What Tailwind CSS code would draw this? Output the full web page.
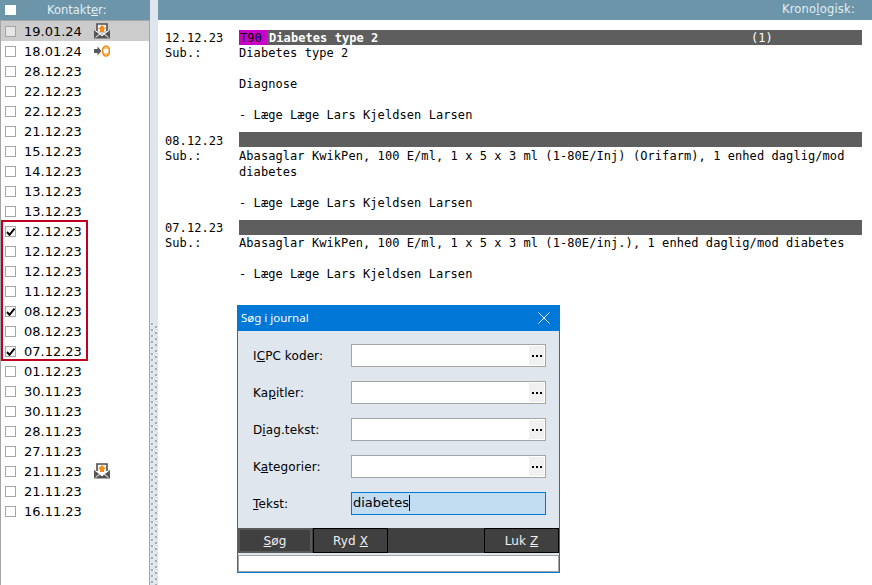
<!DOCTYPE html>
<html>
<head>
<meta charset="utf-8">
<script src="https://cdn.jsdelivr.net/npm/@tailwindcss/browser@4"></script>
</head>
<body class="w-[872px] h-[585px] overflow-hidden bg-white font-['DejaVu_Sans',sans-serif] text-black">
<svg width="0" height="0" class="absolute">
  <defs>
    <g id="mail">
      <path d="M3 8V1h10v7" fill="#f4f4f4" stroke="#4f4f4f" stroke-width="1.600"/>
      <path d="M8 2l4 4H10v3H6V6H4z" fill="#f28c12"/>
      <path d="M0 6.500L8 12.500L16 6.500V15.500H0z" fill="#555"/>
      <path d="M1.500 14.500L6.500 10.500M14.500 14.500L9.500 10.500" stroke="#fff" stroke-width="1" fill="none"/>
      <path d="M0.500 7L8 12.800L15.500 7" stroke="#fff" stroke-width="1" fill="none"/>
    </g>
    <g id="check"><path d="M1 5L3.500 7.800L8.500 1.500" fill="none" stroke="#000" stroke-width="2"/></g>
    <pattern id="grip" width="7" height="6" patternUnits="userSpaceOnUse">
      <rect x="1" y="1" width="2" height="2" fill="#a7adb3"/>
      <rect x="3" y="2" width="1" height="1" fill="#fff"/>
      <rect x="6" y="4" width="1" height="2" fill="#a7adb3"/>
      <rect x="5" y="4" width="1" height="2" fill="#a7adb3"/>
    </pattern>
  </defs>
</svg>

<div class="flex h-[585px]">
  <!-- left -->
  <div class="w-[150px] flex flex-col shrink-0">
    <div class="h-[20px] bg-[#6c95a9] flex items-center pl-[5px]">
      <span class="w-[11px] h-[10px] bg-white block"></span>
      <span class="ml-[31px] text-[11.5px] text-[#e3eef2] leading-[20px]">Kontakt<u>e</u>r:</span>
    </div>
    <div class="flex-1 border-l border-r border-t border-[#a5a5a5] pl-[4px] relative">
      <div class="flex items-center h-[20px] -ml-[4px] pl-[4px] bg-[#cccccc]">
        <span class="block w-[11px] h-[11px] border border-[#a5a5a5] bg-[#e6e6e6]"></span>
        <span class="ml-[8px] pt-[1px] text-[13px] leading-[20px] w-[70px]">19.01.24</span>
        <svg width="16" height="16" viewBox="0 0 16 16"><use href="#mail"/></svg>
      </div>
      <div class="flex items-center h-[20px]">
        <span class="block w-[11px] h-[11px] border border-[#a5a5a5] bg-white"></span>
        <span class="ml-[8px] pt-[1px] text-[13px] leading-[20px] w-[70px]">18.01.24</span>
        <svg width="16" height="16" viewBox="0 0 16 16"><path d="M0 6h3.500V3.500L7.500 8L3.500 12.500V10H0z" fill="#5a5a5a"/><ellipse cx="12" cy="8" rx="3.400" ry="5" fill="#fff" stroke="#f28c12" stroke-width="1.700"/><path d="M8.500 5h7M8.500 11h7" stroke="#f28c12"/></svg>
      </div>
      <div class="flex items-center h-[20px]"><span class="block w-[11px] h-[11px] border border-[#a5a5a5] bg-white"></span><span class="ml-[8px] pt-[1px] text-[13px] leading-[20px]">28.12.23</span></div>
      <div class="flex items-center h-[20px]"><span class="block w-[11px] h-[11px] border border-[#a5a5a5] bg-white"></span><span class="ml-[8px] pt-[1px] text-[13px] leading-[20px]">22.12.23</span></div>
      <div class="flex items-center h-[20px]"><span class="block w-[11px] h-[11px] border border-[#a5a5a5] bg-white"></span><span class="ml-[8px] pt-[1px] text-[13px] leading-[20px]">22.12.23</span></div>
      <div class="flex items-center h-[20px]"><span class="block w-[11px] h-[11px] border border-[#a5a5a5] bg-white"></span><span class="ml-[8px] pt-[1px] text-[13px] leading-[20px]">21.12.23</span></div>
      <div class="flex items-center h-[20px]"><span class="block w-[11px] h-[11px] border border-[#a5a5a5] bg-white"></span><span class="ml-[8px] pt-[1px] text-[13px] leading-[20px]">15.12.23</span></div>
      <div class="flex items-center h-[20px]"><span class="block w-[11px] h-[11px] border border-[#a5a5a5] bg-white"></span><span class="ml-[8px] pt-[1px] text-[13px] leading-[20px]">14.12.23</span></div>
      <div class="flex items-center h-[20px]"><span class="block w-[11px] h-[11px] border border-[#a5a5a5] bg-white"></span><span class="ml-[8px] pt-[1px] text-[13px] leading-[20px]">13.12.23</span></div>
      <div class="flex items-center h-[20px]"><span class="block w-[11px] h-[11px] border border-[#a5a5a5] bg-white"></span><span class="ml-[8px] pt-[1px] text-[13px] leading-[20px]">13.12.23</span></div>

      <div class="flex items-center h-[20px]"><span class="block w-[11px] h-[11px] border border-[#a5a5a5] bg-white relative"><svg class="absolute left-0 top-0" width="9" height="9" viewBox="0 0 9 9"><use href="#check"/></svg></span><span class="ml-[8px] pt-[1px] text-[13px] leading-[20px]">12.12.23</span></div>
      <div class="flex items-center h-[20px]"><span class="block w-[11px] h-[11px] border border-[#a5a5a5] bg-white"></span><span class="ml-[8px] pt-[1px] text-[13px] leading-[20px]">12.12.23</span></div>
      <div class="flex items-center h-[20px]"><span class="block w-[11px] h-[11px] border border-[#a5a5a5] bg-white"></span><span class="ml-[8px] pt-[1px] text-[13px] leading-[20px]">12.12.23</span></div>
      <div class="flex items-center h-[20px]"><span class="block w-[11px] h-[11px] border border-[#a5a5a5] bg-white"></span><span class="ml-[8px] pt-[1px] text-[13px] leading-[20px]">11.12.23</span></div>
      <div class="flex items-center h-[20px]"><span class="block w-[11px] h-[11px] border border-[#a5a5a5] bg-white relative"><svg class="absolute left-0 top-0" width="9" height="9" viewBox="0 0 9 9"><use href="#check"/></svg></span><span class="ml-[8px] pt-[1px] text-[13px] leading-[20px]">08.12.23</span></div>
      <div class="flex items-center h-[20px]"><span class="block w-[11px] h-[11px] border border-[#a5a5a5] bg-white"></span><span class="ml-[8px] pt-[1px] text-[13px] leading-[20px]">08.12.23</span></div>
      <div class="flex items-center h-[20px]"><span class="block w-[11px] h-[11px] border border-[#a5a5a5] bg-white relative"><svg class="absolute left-0 top-0" width="9" height="9" viewBox="0 0 9 9"><use href="#check"/></svg></span><span class="ml-[8px] pt-[1px] text-[13px] leading-[20px]">07.12.23</span></div>

      <div class="flex items-center h-[20px]"><span class="block w-[11px] h-[11px] border border-[#a5a5a5] bg-white"></span><span class="ml-[8px] pt-[1px] text-[13px] leading-[20px]">01.12.23</span></div>
      <div class="flex items-center h-[20px]"><span class="block w-[11px] h-[11px] border border-[#a5a5a5] bg-white"></span><span class="ml-[8px] pt-[1px] text-[13px] leading-[20px]">30.11.23</span></div>
      <div class="flex items-center h-[20px]"><span class="block w-[11px] h-[11px] border border-[#a5a5a5] bg-white"></span><span class="ml-[8px] pt-[1px] text-[13px] leading-[20px]">30.11.23</span></div>
      <div class="flex items-center h-[20px]"><span class="block w-[11px] h-[11px] border border-[#a5a5a5] bg-white"></span><span class="ml-[8px] pt-[1px] text-[13px] leading-[20px]">28.11.23</span></div>
      <div class="flex items-center h-[20px]"><span class="block w-[11px] h-[11px] border border-[#a5a5a5] bg-white"></span><span class="ml-[8px] pt-[1px] text-[13px] leading-[20px]">27.11.23</span></div>
      <div class="flex items-center h-[20px]"><span class="block w-[11px] h-[11px] border border-[#a5a5a5] bg-white"></span><span class="ml-[8px] pt-[1px] text-[13px] leading-[20px] w-[70px]">21.11.23</span><svg width="16" height="16" viewBox="0 0 16 16"><use href="#mail"/></svg></div>
      <div class="flex items-center h-[20px]"><span class="block w-[11px] h-[11px] border border-[#a5a5a5] bg-white"></span><span class="ml-[8px] pt-[1px] text-[13px] leading-[20px]">21.11.23</span></div>
      <div class="flex items-center h-[20px]"><span class="block w-[11px] h-[11px] border border-[#a5a5a5] bg-white"></span><span class="ml-[8px] pt-[1px] text-[13px] leading-[20px]">16.11.23</span></div>

      <div class="absolute left-0 top-[199px] w-[87px] h-[141px] border-2 border-[#c00020] pointer-events-none"></div>
    </div>
  </div>

  <!-- splitter -->
  <div class="w-[8px] shrink-0 bg-[#e0e6ed] flex flex-col">
    <div class="h-[322px] shrink-0"></div>
    <svg width="8" height="263"><rect width="8" height="263" fill="url(#grip)"/></svg>
  </div>

  <!-- right -->
  <div class="flex-1 flex flex-col relative">
    <div class="h-[20px] bg-[#6c95a9] flex items-center justify-end pr-[17px] text-[11.5px] tracking-[0.2px] text-[#e3eef2]">Krono<u>l</u>ogisk:</div>

    <div class="pt-[10px] pl-[7px] pr-[10px] font-['DejaVu_Sans_Mono',monospace] text-[12px] leading-[15.4px] tracking-[0.07px]">
      <div class="mb-[8.6px]">
        <div class="flex h-[16.4px]">
          <span class="w-[74px] shrink-0 pt-[1px]">12.12.23</span>
          <div class="flex-1 h-[15px] bg-[#5e5e5e] text-white flex relative">
            <span class="bg-[#c800c8] text-black w-[28px] pl-[1px] pt-[1px]">T90</span>
            <span class="ml-[2px] font-bold pt-[1px]">Diabetes type 2</span>
            <span class="absolute left-[512px] top-[1px]">(1)</span>
          </div>
        </div>
        <div class="flex"><span class="w-[74px] shrink-0">Sub.:</span><span>Diabetes type 2</span></div>
        <div class="h-[15.4px]"></div>
        <div class="pl-[74px]">Diagnose</div>
        <div class="h-[15.4px]"></div>
        <div class="pl-[74px]">- Læge Læge Lars Kjeldsen Larsen</div>
      </div>
      <div class="mb-[9px]">
        <div class="flex"><span class="w-[74px] shrink-0 pt-[2px]">08.12.23</span><div class="flex-1 h-[15px] bg-[#5e5e5e]"></div></div>
        <div class="flex"><span class="w-[74px] shrink-0">Sub.:</span><span class="w-[620px]">Abasaglar KwikPen, 100 E/ml, 1 x 5 x 3 ml (1-80E/Inj) (Orifarm), 1 enhed daglig/mod diabetes</span></div>
        <div class="h-[15.4px]"></div>
        <div class="pl-[74px]">- Læge Læge Lars Kjeldsen Larsen</div>
      </div>
      <div>
        <div class="flex"><span class="w-[74px] shrink-0 pt-[1px]">07.12.23</span><div class="flex-1 h-[15px] bg-[#5e5e5e]"></div></div>
        <div class="flex"><span class="w-[74px] shrink-0">Sub.:</span><span class="whitespace-nowrap">Abasaglar KwikPen, 100 E/ml, 1 x 5 x 3 ml (1-80E/inj.), 1 enhed daglig/mod diabetes</span></div>
        <div class="h-[15.4px]"></div>
        <div class="pl-[74px]">- Læge Læge Lars Kjeldsen Larsen</div>
      </div>
    </div>

    <!-- dialog -->
    <div class="absolute left-[79px] top-[305px] w-[323px] h-[268px] border border-[#0078d7] bg-[#dfe6ed] flex flex-col text-[12px] tracking-[0.1px]">
      <div class="h-[25px] shrink-0 bg-[#0078d7] text-white flex items-center justify-between pl-[3px] pr-[9px] pb-[1px] font-['Noto_Sans',sans-serif] text-[11.5px] tracking-normal">
        <span>Søg i journal</span>
        <svg width="12" height="12" viewBox="0 0 12 12"><path d="M0.500 0.500L11.500 11.500M11.500 0.500L0.500 11.500" stroke="#fff" fill="none"/></svg>
      </div>
      <div class="flex-1 pt-[13px] flex flex-col gap-[14px]">
        <div class="flex items-center h-[23px] pl-[15px]"><span class="w-[98px] pt-[1px]">I<u>C</u>PC koder:</span><div class="w-[195px] h-[23px] border border-[#a5a5a5] bg-white flex justify-end items-center"><span class="w-[15px] h-[19px] mr-[1px] bg-[#f0f0f0] flex items-center justify-center gap-[2px]"><i class="w-[2px] h-[2px] bg-black"></i><i class="w-[2px] h-[2px] bg-black"></i><i class="w-[2px] h-[2px] bg-black"></i></span></div></div>
        <div class="flex items-center h-[23px] pl-[15px]"><span class="w-[98px] pt-[1px]">Ka<u>p</u>itler:</span><div class="w-[195px] h-[23px] border border-[#a5a5a5] bg-white flex justify-end items-center"><span class="w-[15px] h-[19px] mr-[1px] bg-[#f0f0f0] flex items-center justify-center gap-[2px]"><i class="w-[2px] h-[2px] bg-black"></i><i class="w-[2px] h-[2px] bg-black"></i><i class="w-[2px] h-[2px] bg-black"></i></span></div></div>
        <div class="flex items-center h-[23px] pl-[15px]"><span class="w-[98px] pt-[1px]">D<u>i</u>ag.tekst:</span><div class="w-[195px] h-[23px] border border-[#a5a5a5] bg-white flex justify-end items-center"><span class="w-[15px] h-[19px] mr-[1px] bg-[#f0f0f0] flex items-center justify-center gap-[2px]"><i class="w-[2px] h-[2px] bg-black"></i><i class="w-[2px] h-[2px] bg-black"></i><i class="w-[2px] h-[2px] bg-black"></i></span></div></div>
        <div class="flex items-center h-[23px] pl-[15px]"><span class="w-[98px] pt-[1px]">K<u>a</u>tegorier:</span><div class="w-[195px] h-[23px] border border-[#a5a5a5] bg-white flex justify-end items-center"><span class="w-[15px] h-[19px] mr-[1px] bg-[#f0f0f0] flex items-center justify-center gap-[2px]"><i class="w-[2px] h-[2px] bg-black"></i><i class="w-[2px] h-[2px] bg-black"></i><i class="w-[2px] h-[2px] bg-black"></i></span></div></div>
        <div class="flex items-center h-[23px] pl-[15px]"><span class="w-[98px] pt-[1px]"><u>T</u>ekst:</span><div class="w-[195px] h-[23px] border border-[#0078d7] bg-[#c2dcf2] pl-[1px] text-[13px] tracking-normal leading-[20px] flex items-start"><span>diabetes</span><span class="w-px h-[16px] bg-black mt-[2px]"></span></div></div>
      </div>
      <div class="h-[25px] shrink-0 bg-[#404040] flex justify-between text-[#f0f0f0]">
        <div class="flex">
          <span class="w-[74px] border-2 border-[#5a5a5a] flex items-center justify-center"><u>S</u>øg</span>
          <span class="w-[75px] ml-px border border-black flex items-center justify-center">Ryd&nbsp;<u>X</u></span>
        </div>
        <span class="w-[75px] border border-black flex items-center justify-center">Luk&nbsp;<u>Z</u></span>
      </div>
      <div class="h-[17px] shrink-0 mt-[2px] bg-white border border-[#a5a5a5]"></div>
    </div>
  </div>
</div>
</body>
</html>
